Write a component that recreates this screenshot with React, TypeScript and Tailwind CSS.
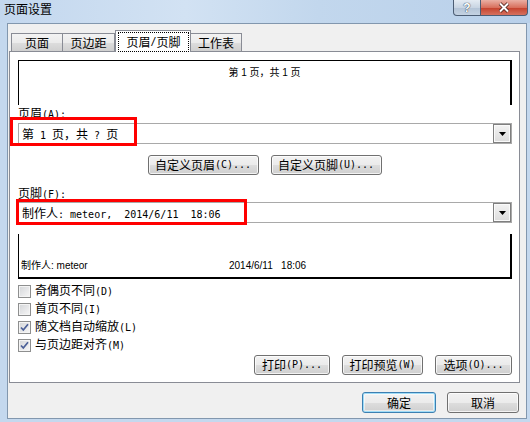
import React from "react";

// ASCII runs are drawn half-width (like SimSun), CJK stays in Noto
const T = ({ text }: { text: string }) => (
  <>
    {text.split(/([\x20-\x7e]+)/).map((part, i) =>
      i % 2 === 1 ? (
        <span key={i} className="font-['DejaVu_Sans_Mono',monospace] text-[10px] whitespace-pre">
          {part}
        </span>
      ) : (
        <span key={i}>{part}</span>
      )
    )}
  </>
);

const btn =
  "flex items-center justify-center rounded-[3px] border border-[#707070] bg-[linear-gradient(#f2f2f2_0%,#ebebeb_50%,#dddddd_51%,#cfcfcf_100%)] shadow-[inset_0_0_0_1px_rgba(255,255,255,0.75)] text-[12px] leading-[14px] text-black";

const Button = ({ label, className = "" }: { label: string; className?: string }) => (
  <div className={`${btn} ${className}`}>
    <T text={label} />
  </div>
);

const Combo = ({ text }: { text: string }) => (
  <div className="ml-[8px] w-[494px] h-[21px] flex border border-[#a9a9a9] bg-white">
    <div className="flex-1 pl-[3px] leading-[19px] text-[12px] whitespace-pre">
      <T text={text} />
    </div>
    <div className="w-[18px] flex items-center justify-center border border-[#7f7f7f] bg-[linear-gradient(#f3f3f3,#dcdcdc)] shadow-[inset_0_0_0_1px_#fafafa]">
      <svg width="7" height="4" viewBox="0 0 7 4">
        <path d="M0 0h7L3.5 4z" fill="#000" />
      </svg>
    </div>
  </div>
);

const Check = ({ label, checked }: { label: string; checked?: boolean }) => (
  <div className="h-[18px] flex items-center pl-[8px] gap-[4px]">
    <div className="w-[13px] h-[13px] border border-[#8e8f8f] bg-[linear-gradient(135deg,#d3d5d8,#f7f7f7)] shadow-[inset_0_0_0_1px_#f4f4f4] flex items-center justify-center">
      {checked && (
        <svg width="11" height="11" viewBox="0 0 11 11">
          <path d="M2 5.5 L4.3 8 L9 2.2" stroke="#4a5f97" strokeWidth="1.7" fill="none" />
        </svg>
      )}
    </div>
    <span className="text-[12px] leading-[14px]">
      <T text={label} />
    </span>
  </div>
);

const tabBg =
  "border-[#898c95] bg-[linear-gradient(#f3f3f3,#ebebeb_50%,#dddddd_51%,#d0d0d0)] flex items-center justify-center text-[12px] leading-[14px]";

export default function App() {
  return (
    <div className="relative w-[530px] h-[422px] overflow-hidden bg-[#c4d8ee] font-['Noto_Sans_CJK_SC','Noto_Sans_CJK_JP',sans-serif] text-black">
      {/* title bar */}
      <div className="h-[23px] flex items-start justify-between bg-[linear-gradient(90deg,#c3d7ee_0%,#d2e2f3_35%,#c2d7ed_60%,#b9d0ea_100%)]">
        <div className="pl-[4px] pt-[1px] text-[12px] leading-[16px]">页面设置</div>
        <div className="flex mr-[2px]">
          <div className="w-[28px] h-[16px] rounded-bl-[4px] border border-t-0 border-[#4c5d74] bg-[linear-gradient(#e4ebf3,#c9d5e3_50%,#b3c3d6_51%,#c4d2e2)] flex items-center justify-center">
            <span className="text-[12px] leading-[12px] font-bold font-['Liberation_Sans',sans-serif] text-white [text-shadow:0_0_1px_#2c3a4d,0_0_1px_#2c3a4d]">?</span>
          </div>
          <div className="w-[47px] h-[16px] rounded-br-[4px] border border-t-0 border-l-0 border-[#4c5d74] bg-[linear-gradient(#eab0a4,#d8705d_50%,#c4402b_51%,#d6715f)] flex items-center justify-center">
            <svg width="14" height="11" viewBox="0 0 14 11">
              <path d="M3 1.5 L11 9.5 M11 1.5 L3 9.5" stroke="#4b1f18" strokeWidth="3.6" />
              <path d="M3 1.5 L11 9.5 M11 1.5 L3 9.5" stroke="#fff" strokeWidth="2" />
            </svg>
          </div>
        </div>
      </div>

      {/* client area */}
      <div className="ml-[7px] w-[520px] h-[396px] border border-[#8297ae] bg-[#f0f0f0] flex flex-col">
        <div className="ml-[1px] mt-[7px] w-[511px] flex flex-col">
          {/* tabs */}
          <div className="relative z-10 h-[20px] flex items-end pl-[2px]">
            <div className={`w-[52px] h-[18px] border border-b-0 ${tabBg}`}>页面</div>
            <div className={`w-[52px] h-[18px] border border-l-0 border-b-0 ${tabBg}`}>页边距</div>
            <div className="w-[76px] h-[22px] -mb-[1px] border border-b-0 border-[#898c95] bg-white pl-[2px] pr-[1px] pt-[1px]">
              <div className="h-full border border-dotted border-black flex items-center justify-center text-[12px] leading-[14px]">
                <T text="页眉/页脚" />
              </div>
            </div>
            <div className={`w-[51px] h-[18px] border border-l-0 border-b-0 ${tabBg}`}>工作表</div>
          </div>

          {/* panel */}
          <div className="relative h-[332px] border border-[#898c95] bg-white flex flex-col">
            <div className="ml-[8px] mt-[8px] w-[494px] h-[45px] border-t border-l border-r-2 border-black text-center pt-[6px] text-[10px] leading-[12px] whitespace-pre font-['Liberation_Sans','Noto_Sans_CJK_SC',sans-serif]">
              第 1 页，共 1 页
            </div>

            <div className="ml-[8px] mt-[1px] h-[14px] text-[12px] leading-[14px]">
              <T text="页眉(A):" />
            </div>
            <div className="mt-[3px]">
              <Combo text="第 1 页，共 ? 页" />
            </div>

            <div className="mt-[11px] h-[20px] flex justify-center gap-[12px]">
              <Button label="自定义页眉(C)..." className="w-[111px]" />
              <Button label="自定义页脚(U)..." className="w-[111px]" />
            </div>

            <div className="ml-[8px] mt-[11px] h-[14px] text-[12px] leading-[14px]">
              <T text="页脚(F):" />
            </div>
            <div className="mt-[2px]">
              <Combo text="制作人: meteor,  2014/6/11  18:06" />
            </div>

            <div className="ml-[8px] mt-[11px] w-[494px] h-[45px] border-l border-r-2 border-b-2 border-black flex items-end pb-[5px] text-[10px] leading-[12px] font-['Liberation_Sans','Noto_Sans_CJK_SC',sans-serif]">
              <span className="pl-[2px] w-[210px]">制作人: meteor</span>
              <span className="whitespace-pre">2014/6/11   18:06</span>
            </div>

            <div className="mt-[3px] flex flex-col">
              <Check label="奇偶页不同(D)" />
              <Check label="首页不同(I)" />
              <Check label="随文档自动缩放(L)" checked />
              <Check label="与页边距对齐(M)" checked />
            </div>

            <div className="mt-[1px] h-[20px] flex justify-end pr-[7px] gap-[12px]">
              <Button label="打印(P)..." className="w-[76px]" />
              <Button label="打印预览(W)" className="w-[81px]" />
              <Button label="选项(O)..." className="w-[77px]" />
            </div>

            {/* highlight boxes */}
            <div className="absolute left-0 top-[65px] w-[127px] h-[29px] border-[3px] border-[#ff0000]" />
            <div className="absolute left-[6px] top-[147px] w-[231px] h-[26px] border-[3px] border-[#ff0000]" />
          </div>
        </div>

        <div className="mt-[9px] h-[21px] flex justify-end pr-[7px] gap-[11px]">
          <Button
            label="确定"
            className="w-[74px] !border-[#3c7fb1] !shadow-[inset_0_0_0_1px_#9fdcf7,inset_0_0_0_2px_rgba(255,255,255,0.5)]"
          />
          <Button label="取消" className="w-[72px]" />
        </div>
      </div>
    </div>
  );
}
